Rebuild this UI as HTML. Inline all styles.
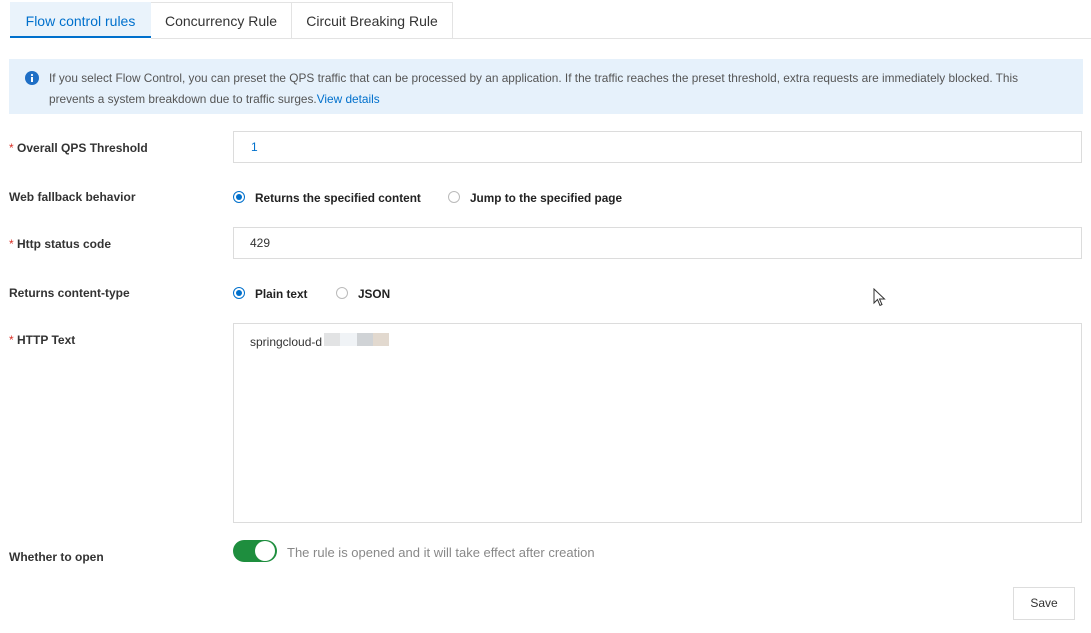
<!DOCTYPE html>
<html><head><style>
body{margin:0;width:1091px;height:633px;background:#fff;font-family:"Liberation Sans",sans-serif;font-size:12px;color:#333;position:relative;overflow:hidden}
.a{position:absolute;white-space:nowrap}
.tab{position:absolute;top:2px;height:36px;line-height:36px;text-align:center;font-size:14px;color:#333;border:1px solid #e3e3e3;border-bottom:none;box-sizing:border-box;background:#fff}
.lbl{position:absolute;left:9px;font-weight:bold;font-size:12px;color:#333}
.lbl b{color:#d93026;font-weight:normal}
.inp{position:absolute;left:233px;width:849px;border:1px solid #dcdcdc;box-sizing:border-box;font-size:12px;padding-left:16px}
.rad{position:absolute;width:12px;height:12px;border-radius:50%;border:1px solid #bbb;box-sizing:border-box;background:#fff}
.rad.on{border:1px solid #0070cc}
.rad.on:after{content:"";position:absolute;left:2px;top:2px;width:6px;height:6px;border-radius:50%;background:#0070cc}
.rt{position:absolute;font-weight:bold;font-size:11.8px;color:#222}
</style></head><body>
<div class="tab" style="left:10px;width:141px;background:#eaf3fb;color:#0070cc;border-color:#eaf3fb;">Flow control rules</div>
<div style="position:absolute;left:10px;top:36px;width:141px;height:2px;background:#0070cc"></div>
<div class="tab" style="left:151px;width:141px;border-left:none">Concurrency Rule</div>
<div class="tab" style="left:292px;width:161px;border-left:none">Circuit Breaking Rule</div>
<div style="position:absolute;left:151px;top:38px;width:940px;height:1px;background:#e3e3e3"></div>

<div style="position:absolute;left:9px;top:59px;width:1074px;height:55px;background:#e6f1fb"></div>
<svg class="a" style="left:25px;top:71px" width="14" height="14" viewBox="0 0 14 14"><circle cx="7" cy="7" r="7" fill="#1f6fc5"/><rect x="6" y="6" width="2" height="5" fill="#fff"/><circle cx="7" cy="4" r="1.1" fill="#fff"/></svg>
<div class="a" style="left:49px;top:71px;color:#555;line-height:14px;font-size:11.85px">If you select Flow Control, you can preset the QPS traffic that can be processed by an application. If the traffic reaches the preset threshold, extra requests are immediately blocked. This</div>
<div class="a" style="left:49px;top:92px;color:#555;line-height:14px;font-size:11.85px">prevents a system breakdown due to traffic surges.<span style="color:#0070cc">View details</span></div>

<div class="lbl" style="top:141px"><b>*</b> Overall QPS Threshold</div>
<div class="inp" style="top:131px;height:32px;line-height:30px;color:#0070cc;padding-left:17px">1</div>

<div class="lbl" style="top:190px">Web fallback behavior</div>
<div class="rad on" style="left:233px;top:191px"></div><div class="rt" style="left:255px;top:191px">Returns the specified content</div>
<div class="rad" style="left:448px;top:191px"></div><div class="rt" style="left:470px;top:191px">Jump to the specified page</div>

<div class="lbl" style="top:237px"><b>*</b> Http status code</div>
<div class="inp" style="top:227px;height:32px;line-height:30px">429</div>

<div class="lbl" style="top:286px">Returns content-type</div>
<div class="rad on" style="left:233px;top:287px"></div><div class="rt" style="left:255px;top:287px">Plain text</div>
<div class="rad" style="left:336px;top:287px"></div><div class="rt" style="left:358px;top:287px">JSON</div>

<div class="lbl" style="top:333px"><b>*</b> HTTP Text</div>
<div class="inp" style="top:323px;height:200px;padding-top:11px">springcloud-d</div>
<div class="a" style="left:324px;top:333px;width:16px;height:13px;background:#e2e3e4"></div>
<div class="a" style="left:340px;top:333px;width:17px;height:13px;background:#f0f3f6"></div>
<div class="a" style="left:357px;top:333px;width:16px;height:13px;background:#d0d3d6"></div>
<div class="a" style="left:373px;top:333px;width:16px;height:13px;background:#e2d9cf"></div>

<svg class="a" style="left:873px;top:288px" width="14" height="20" viewBox="0 0 14 20"><path d="M1 1 L1 15 L4.5 11.5 L7 17.5 L9 16.5 L6.5 11 L11.5 11 Z" fill="#fff" stroke="#333" stroke-width="1"/></svg>

<div class="lbl" style="top:550px">Whether to open</div>
<div class="a" style="left:233px;top:540px;width:44px;height:22px;border-radius:11px;background:#1e8e3e"></div>
<div class="a" style="left:255px;top:541px;width:20px;height:20px;border-radius:50%;background:#fff"></div>
<div class="a" style="left:287px;top:545px;color:#888;font-size:13px">The rule is opened and it will take effect after creation</div>

<div class="a" style="left:1013px;top:587px;width:62px;height:33px;border:1px solid #ddd;box-sizing:border-box;text-align:center;line-height:31px;color:#333;background:#fff">Save</div>
</body></html>
